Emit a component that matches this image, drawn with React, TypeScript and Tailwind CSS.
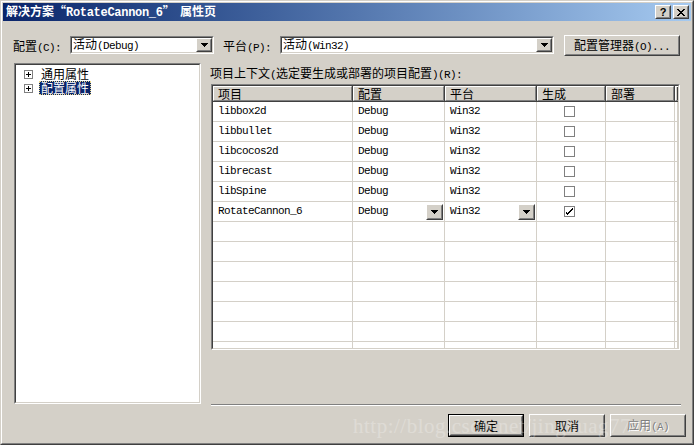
import React from "react";

const CJK = "font-['Noto_Sans_CJK_SC',sans-serif] text-[12px] leading-[14px]";

function L({ children }: { children: React.ReactNode }) {
  return <span className="font-['Liberation_Mono',monospace] text-[11px] tracking-[-0.6px]">{children}</span>;
}

function Raised({ className = "", children }: { className?: string; children?: React.ReactNode }) {
  return (
    <div className={`border border-t-white border-l-white border-r-[#404040] border-b-[#404040] bg-[#d4d0c8] ${className}`}>
      <div className="w-full h-full border border-t-[#d4d0c8] border-l-[#d4d0c8] border-r-[#808080] border-b-[#808080] flex items-center justify-center">
        {children}
      </div>
    </div>
  );
}

function Sunken({ className = "", inner = "", children }: { className?: string; inner?: string; children?: React.ReactNode }) {
  return (
    <div className={`border border-t-[#808080] border-l-[#808080] border-r-white border-b-white ${className}`}>
      <div className={`w-full h-full border border-t-[#404040] border-l-[#404040] border-r-[#d4d0c8] border-b-[#d4d0c8] bg-white ${inner}`}>
        {children}
      </div>
    </div>
  );
}

function Arrow() {
  return (
    <svg width="7" height="4" viewBox="0 0 7 4" shapeRendering="crispEdges">
      <path d="M0 0h7v1h-1v1h-1v1h-1v1h-1v-1h-1v-1h-1v-1h-1z" fill="#000" />
    </svg>
  );
}

function Combo({ w, children }: { w: string; children: React.ReactNode }) {
  return (
    <Sunken className={`${w} h-[18px]`} inner="flex items-center">
      <div className={`${CJK} pl-[1px] flex-1 whitespace-nowrap`}>{children}</div>
      <Raised className="w-[16px] h-[14px]">
        <Arrow />
      </Raised>
    </Sunken>
  );
}

function PlusBox() {
  return (
    <div className="w-[9px] h-[9px] border border-[#808080] bg-white flex items-center justify-center shrink-0">
      <svg width="5" height="5" viewBox="0 0 5 5" shapeRendering="crispEdges">
        <path d="M0 2h5v1H0zM2 0h1v5H2z" fill="#000" />
      </svg>
    </div>
  );
}

function CheckBox({ checked }: { checked: boolean }) {
  return (
    <div className="w-[11px] h-[11px] border border-[#808080] bg-white flex items-center justify-center">
      {checked && (
        <svg width="7" height="7" viewBox="0 0 7 7" shapeRendering="crispEdges">
          <path d="M6 0h1v2h-1v1h-1v1h-1v1h-1v1h-1v1h-1v-1h-1v-1h-1v-2h1v1h1v1h1v-1h1v-1h1v-1h1z" fill="#000" />
        </svg>
      )}
    </div>
  );
}

function HeaderCell({ w, children }: { w: string; children?: React.ReactNode }) {
  return (
    <div className={`${w} h-full bg-[#d4d0c8] border-r border-b border-r-[#404040] border-b-[#404040]`}>
      <div className={`h-full border-t border-l border-t-white border-l-white border-r border-b border-r-[#808080] border-b-[#808080] pl-[4px] flex items-center ${CJK}`}>
        {children}
      </div>
    </div>
  );
}

const rows: [string, boolean][] = [
  ["libbox2d", false],
  ["libbullet", false],
  ["libcocos2d", false],
  ["librecast", false],
  ["libSpine", false],
  ["RotateCannon_6", true],
];

const MONO = "font-['Liberation_Mono',monospace] text-[11px] tracking-[-0.6px]";

function Cell({ w, children, last = false }: { w: string; children?: React.ReactNode; last?: boolean }) {
  return (
    <div className={`${w} h-full border-r border-[#d4d0c8] flex items-center ${last ? "" : "pl-[5px]"}`}>{children}</div>
  );
}

export default function App() {
  return (
    <div className="relative w-[694px] h-[445px] bg-[#d4d0c8] border border-t-[#d4d0c8] border-l-[#d4d0c8] border-r-[#404040] border-b-[#404040] overflow-hidden">
      <div className="w-full h-full border border-t-white border-l-white border-r-[#808080] border-b-[#808080] p-px flex flex-col">
        {/* Title bar */}
        <div className="h-[18px] bg-gradient-to-r from-[#0a246a] to-[#a6caf0] flex items-center pl-[3px] pr-[2px]">
          <div className="text-white font-bold whitespace-nowrap font-['Noto_Sans_CJK_SC',sans-serif] text-[12px] leading-[14px]">
            解决方案“<span className="font-['Liberation_Mono',monospace] text-[12px] tracking-[-0.3px] font-bold">RotateCannon_6</span>”&nbsp;&nbsp;属性页
          </div>
          <div className="ml-auto flex">
            <Raised className="w-[16px] h-[14px]">
              <span className="font-['Liberation_Sans',sans-serif] font-bold text-[11px] leading-none text-black">?</span>
            </Raised>
            <Raised className="w-[16px] h-[14px] ml-[2px]">
              <svg width="8" height="7" viewBox="0 0 8 7" shapeRendering="crispEdges">
                <path d="M0 0h2v1h1v1h2v-1h1v-1h2v1h-1v1h-1v1h-1v1h1v1h1v1h1v1h-2v-1h-1v-1h-2v1h-1v1h-2v-1h1v-1h1v-1h1v-1h-1v-1h-1v-1h-1z" fill="#000" />
              </svg>
            </Raised>
          </div>
        </div>

        {/* Config row */}
        <div className="mt-[14px] h-[21px] flex items-start pl-[10px]">
          <div className={`${CJK} w-[57px] mt-[4px] whitespace-nowrap`}>
            配置<L>(C):</L>
          </div>
          <div className="mt-[1px]">
            <Combo w="w-[144px]">
              活动<L>(Debug)</L>
            </Combo>
          </div>
          <div className={`${CJK} w-[57px] ml-[9px] mt-[4px] whitespace-nowrap`}>
            平台<L>(P):</L>
          </div>
          <div className="mt-[1px]">
            <Combo w="w-[274px]">
              活动<L>(Win32)</L>
            </Combo>
          </div>
          <Raised className="w-[116px] h-[21px] ml-[10px]">
            <span className={`${CJK} whitespace-nowrap`}>
              配置管理器<L>(O)...</L>
            </span>
          </Raised>
        </div>

        {/* Main */}
        <div className="mt-[7px] flex">
          <Sunken className="w-[187px] h-[341px] ml-[11px]" inner="pt-[2px] pl-[8px]">
            <div className="h-[14px] flex items-center">
              <PlusBox />
              <div className="font-['Noto_Sans_CJK_SC',sans-serif] text-[12px] leading-[12px] h-[14px] flex items-center ml-[6px] px-[1px] border border-transparent">通用属性</div>
            </div>
            <div className="h-[14px] flex items-center">
              <PlusBox />
              <div className="font-['Noto_Sans_CJK_SC',sans-serif] text-[12px] leading-[12px] h-[14px] flex items-center ml-[6px] px-[1px] bg-[#0a246a] text-white border border-dotted border-[#e8d890]">配置属性</div>
            </div>
          </Sunken>

          <div className="ml-[10px] w-[470px] flex flex-col">
            <div className="h-[21px] flex items-center">
              <div className={`${CJK} whitespace-nowrap -ml-[1px]`}>
                项目上下文<L>(</L>选定要生成或部署的项目配置<L>)(R):</L>
              </div>
            </div>
            <Sunken className="w-[469px] h-[266px]" inner="overflow-hidden">
              <div className="flex h-[16px]">
                <HeaderCell w="w-[140px]">项目</HeaderCell>
                <HeaderCell w="w-[92px]">配置</HeaderCell>
                <HeaderCell w="w-[92px]">平台</HeaderCell>
                <HeaderCell w="w-[69px]">生成</HeaderCell>
                <HeaderCell w="w-[69px]">部署</HeaderCell>
                <HeaderCell w="w-[3px]" />
              </div>
              {rows.map(([name, last]) => (
                <div key={name} className="flex h-[20px] border-b border-[#d4d0c8]">
                  <Cell w="w-[140px]">
                    <span className={MONO}>{name}</span>
                  </Cell>
                  <Cell w="w-[92px]">
                    <span className={MONO}>Debug</span>
                    {last && (
                      <Raised className="w-[17px] h-[16px] ml-auto mr-[1px]">
                        <Arrow />
                      </Raised>
                    )}
                  </Cell>
                  <Cell w="w-[92px]">
                    <span className={MONO}>Win32</span>
                    {last && (
                      <Raised className="w-[17px] h-[16px] ml-auto mr-[1px]">
                        <Arrow />
                      </Raised>
                    )}
                  </Cell>
                  <div className="w-[69px] h-full border-r border-[#d4d0c8] flex items-center pl-[27px]">
                    <CheckBox checked={last} />
                  </div>
                  <Cell w="w-[69px]" last />
                  <Cell w="w-[3px]" last />
                </div>
              ))}
              {[0, 1, 2, 3, 4, 5, 6].map((i) => (
                <div key={i} className="flex h-[20px] border-b border-[#d4d0c8]">
                  <Cell w="w-[140px]" last />
                  <Cell w="w-[92px]" last />
                  <Cell w="w-[92px]" last />
                  <Cell w="w-[69px]" last />
                  <Cell w="w-[69px]" last />
                  <Cell w="w-[3px]" last />
                </div>
              ))}
            </Sunken>
            <div className="mt-[54px] h-[2px] border-t border-t-[#808080] border-b border-b-white" />
          </div>
        </div>

        {/* Buttons */}
        <div className="mt-[8px] flex justify-end pr-[5px] gap-[5px]">
          <div className="border border-black">
            <Raised className="w-[74px] h-[21px]">
              <span className={CJK}>确定</span>
            </Raised>
          </div>
          <Raised className="w-[76px] h-[23px]">
            <span className={CJK}>取消</span>
          </Raised>
          <Raised className="w-[76px] h-[23px]">
            <span className={`${CJK} text-[#808080] [text-shadow:1px_1px_0_#fff]`}>
              应用<L>(A)</L>
            </span>
          </Raised>
        </div>
      </div>

      {/* watermark */}
      <div className="pointer-events-none absolute left-[352px] top-[412px] font-['Liberation_Serif',serif] text-[21px] leading-[26px] text-white opacity-25 whitespace-nowrap tracking-[0.5px]">
        http://blog.csdn.net/jinghuag77
      </div>
    </div>
  );
}
